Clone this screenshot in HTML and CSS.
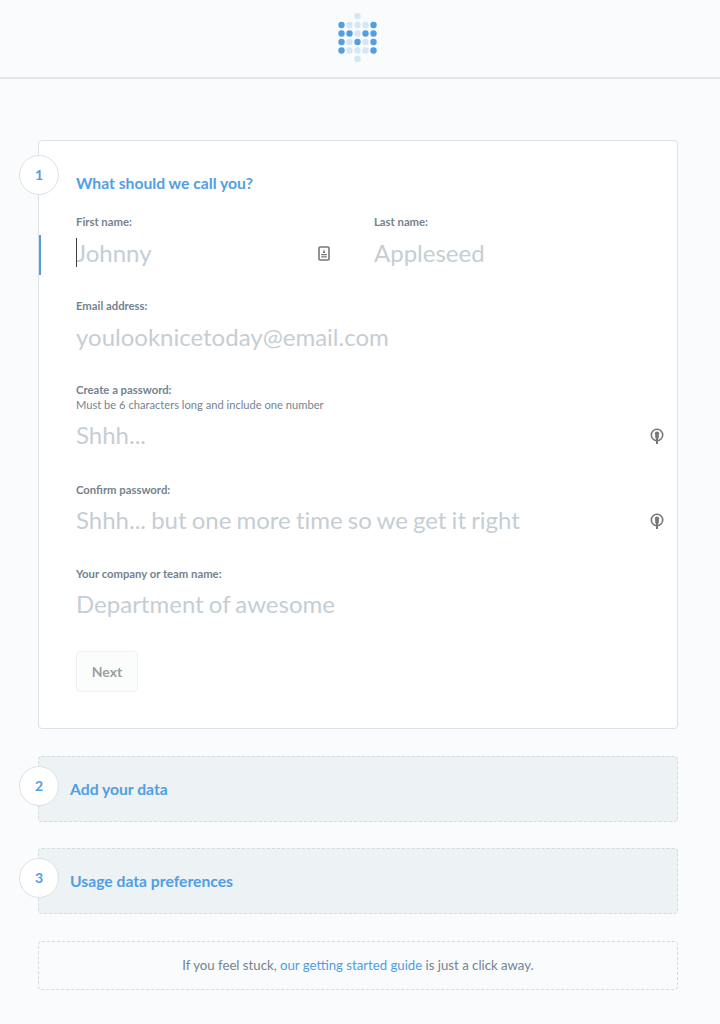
FILE: index.html
```html
<!DOCTYPE html>
<html lang="en">
<head>
    <meta charset="UTF-8">
    <meta name="viewport" content="width=device-width, initial-scale=1.0">
    <title>Welcome</title>
    <link rel="stylesheet" href="styles.css">
</head>
<body>
    <header class="top-bar">
        <svg class="logo" width="40" height="50" viewBox="0 0 40 50">
            <g fill="#d5e7f7">
                <circle cx="19.5" cy="3" r="3.2"/>
                <circle cx="11.5" cy="12" r="3.2"/><circle cx="19.5" cy="12" r="3.2"/><circle cx="27.5" cy="12" r="3.2"/>
                <circle cx="19.5" cy="20.5" r="3.2"/>
                <circle cx="11.5" cy="29" r="3.2"/><circle cx="27.5" cy="29" r="3.2"/>
                <circle cx="11.5" cy="37.5" r="3.2"/><circle cx="19.5" cy="37.5" r="3.2"/><circle cx="27.5" cy="37.5" r="3.2"/>
                <circle cx="19.5" cy="46" r="3.2"/>
            </g>
            <g fill="#509ee3">
                <circle cx="3.5" cy="12" r="3.2"/><circle cx="35.5" cy="12" r="3.2"/>
                <circle cx="3.5" cy="20.5" r="3.2"/><circle cx="11.5" cy="20.5" r="3.2"/><circle cx="27.5" cy="20.5" r="3.2"/><circle cx="35.5" cy="20.5" r="3.2"/>
                <circle cx="3.5" cy="29" r="3.2"/><circle cx="19.5" cy="29" r="3.2"/><circle cx="35.5" cy="29" r="3.2"/>
                <circle cx="3.5" cy="37.5" r="3.2"/><circle cx="35.5" cy="37.5" r="3.2"/>
            </g>
        </svg>
    </header>

    <main class="page">
        <section class="step step-open">
            <div class="step-num">1</div>
            <h2 class="step-title">What should we call you?</h2>
            <form>
                <div class="name-row">
                    <div class="field field-active">
                        <label for="first">First name:</label>
                        <div class="input-wrap">
                            <span class="caret"></span>
                            <input id="first" type="text" placeholder="Johnny">
                            <svg class="card-icon" width="12" height="15" viewBox="0 0 12 15">
                                <rect x="1" y="1" width="10" height="13" rx="1" fill="#fff" stroke="#777" stroke-width="1.6"/>
                                <path d="M6 3.2 7.3 7H4.7z" fill="#777"/>
                                <path d="M3.2 8h5.6v1.2H3.2zM3.2 10.2h5.6v1.2H3.2z" fill="#777"/>
                            </svg>
                        </div>
                    </div>
                    <div class="field">
                        <label for="last">Last name:</label>
                        <input id="last" type="text" placeholder="Appleseed">
                    </div>
                </div>
                <div class="field">
                    <label for="email">Email address:</label>
                    <input id="email" type="text" placeholder="youlooknicetoday@email.com">
                </div>
                <div class="field field-hint">
                    <label for="pass">Create a password:</label>
                    <p class="hint">Must be 6 characters long and include one number</p>
                    <div class="input-wrap">
                        <input id="pass" type="text" placeholder="Shhh...">
                        <svg class="key-icon" width="14" height="16" viewBox="0 0 14 16">
                            <circle cx="7" cy="7" r="5.7" fill="none" stroke="#777" stroke-width="1.6"/>
                            <circle cx="7" cy="5.6" r="2.2" fill="#777"/>
                            <path d="M5.2 7h3.6v3.2H5.2zM6 10.2h2V16H6z" fill="#777"/>
                        </svg>
                    </div>
                </div>
                <div class="field field-tight">
                    <label for="confirm">Confirm password:</label>
                    <div class="input-wrap">
                        <input id="confirm" type="text" placeholder="Shhh... but one more time so we get it right">
                        <svg class="key-icon" width="14" height="16" viewBox="0 0 14 16">
                            <circle cx="7" cy="7" r="5.7" fill="none" stroke="#777" stroke-width="1.6"/>
                            <circle cx="7" cy="5.6" r="2.2" fill="#777"/>
                            <path d="M5.2 7h3.6v3.2H5.2zM6 10.2h2V16H6z" fill="#777"/>
                        </svg>
                    </div>
                </div>
                <div class="field field-tight">
                    <label for="team">Your company or team name:</label>
                    <input id="team" type="text" placeholder="Department of awesome">
                </div>
                <button class="next-btn" type="button">Next</button>
            </form>
        </section>

        <section class="step step-closed">
            <div class="step-num">2</div>
            <h2 class="step-title">Add your data</h2>
        </section>

        <section class="step step-closed">
            <div class="step-num">3</div>
            <h2 class="step-title">Usage data preferences</h2>
        </section>

        <div class="help-box">
            If you feel stuck, <a href="#">our getting started guide</a> is just a click away.
        </div>
    </main>
</body>
</html>
```

FILE: styles.css
```css
* {
    box-sizing: border-box;
}
body {
    margin: 0;
    background-color: #f9fbfc;
    color: #74838f;
    font-family: Lato, "Noto Sans", sans-serif;
}
.top-bar {
    height: 79px;
    display: flex;
    justify-content: center;
    align-items: flex-start;
    padding: 13px 5px 0 0;
    border-bottom: 2px solid #e4e7ea;
}
.logo {
    display: block;
}
.page {
    padding: 61px 42px 0 38px;
}
.step {
    position: relative;
    border-radius: 4px;
}
.step-num {
    position: absolute;
    left: -20px;
    top: 14px;
    width: 40px;
    height: 40px;
    border: 1px solid #dce1e4;
    border-radius: 50%;
    background-color: #fff;
    color: #509ee3;
    font-size: 14px;
    font-weight: 700;
    line-height: 38px;
    text-align: center;
}
.step-title {
    margin: 0;
    color: #509ee3;
    font-size: 15.7px;
    font-weight: 700;
    line-height: 20px;
}
.step-open {
    height: 589px;
    padding: 32px 37px;
    background-color: #fff;
    border: 1px solid #dce1e4;
}
.step-closed {
    height: 66px;
    margin-top: 26px;
    padding: 22px 31px;
    background-color: #edf2f5;
    border: 1px dashed #d3dbe0;
}
.step-open + .step-closed {
    margin-top: 27px;
}
.step-closed .step-num {
    top: 9px;
}
form {
    margin-top: 21px;
}
.name-row {
    display: grid;
    grid-template-columns: 298px 1fr;
}
.field {
    margin-bottom: 26px;
}
.field-hint {
    margin-bottom: 28px;
}
.field-tight {
    margin-bottom: 27px;
}
.field label {
    display: block;
    height: 16px;
    font-size: 11.3px;
    font-weight: 700;
    line-height: 16px;
}
.hint {
    margin: 0;
    height: 14px;
    font-size: 11.15px;
    line-height: 14px;
}
.field-active {
    margin-left: -37px;
    padding-left: 37px;
    position: relative;
}
.field-active::before {
    content: "";
    position: absolute;
    left: 0;
    top: 21px;
    width: 2px;
    height: 40px;
    background-color: #509ee3;
}
.input-wrap {
    position: relative;
}
input {
    display: block;
    width: 100%;
    height: 36px;
    margin: 6px 0 0;
    padding: 0 0 4px;
    border: 0;
    outline: 0;
    background: transparent;
    color: #2e353b;
    font-family: inherit;
    font-size: 24px;
    font-weight: 400;
    word-spacing: -1px;
    font-variant-ligatures: none;
}
input::placeholder {
    color: #c5ced4;
    opacity: 1;
}
.field-tight input {
    margin-top: 5px;
}
.caret {
    position: absolute;
    left: 0;
    top: 2px;
    width: 1px;
    height: 29px;
    background-color: #3a3f44;
}
.card-icon {
    position: absolute;
    left: 242px;
    top: 10px;
}
.key-icon {
    position: absolute;
    right: -24px;
    top: 10px;
}
.next-btn {
    display: block;
    width: 62px;
    height: 41px;
    margin-top: 28px;
    padding: 0;
    border: 1px solid #eef1f3;
    border-radius: 4px;
    background-color: #fbfcfc;
    color: #9a9fa3;
    font-family: inherit;
    font-size: 14px;
    font-weight: 700;
}
.help-box {
    height: 49px;
    margin-top: 27px;
    border: 1px dashed #d3dbe0;
    border-radius: 4px;
    color: #74838f;
    font-size: 13.2px;
    line-height: 47px;
    text-align: center;
}
.help-box a {
    color: #509ee3;
    text-decoration: none;
}
```
